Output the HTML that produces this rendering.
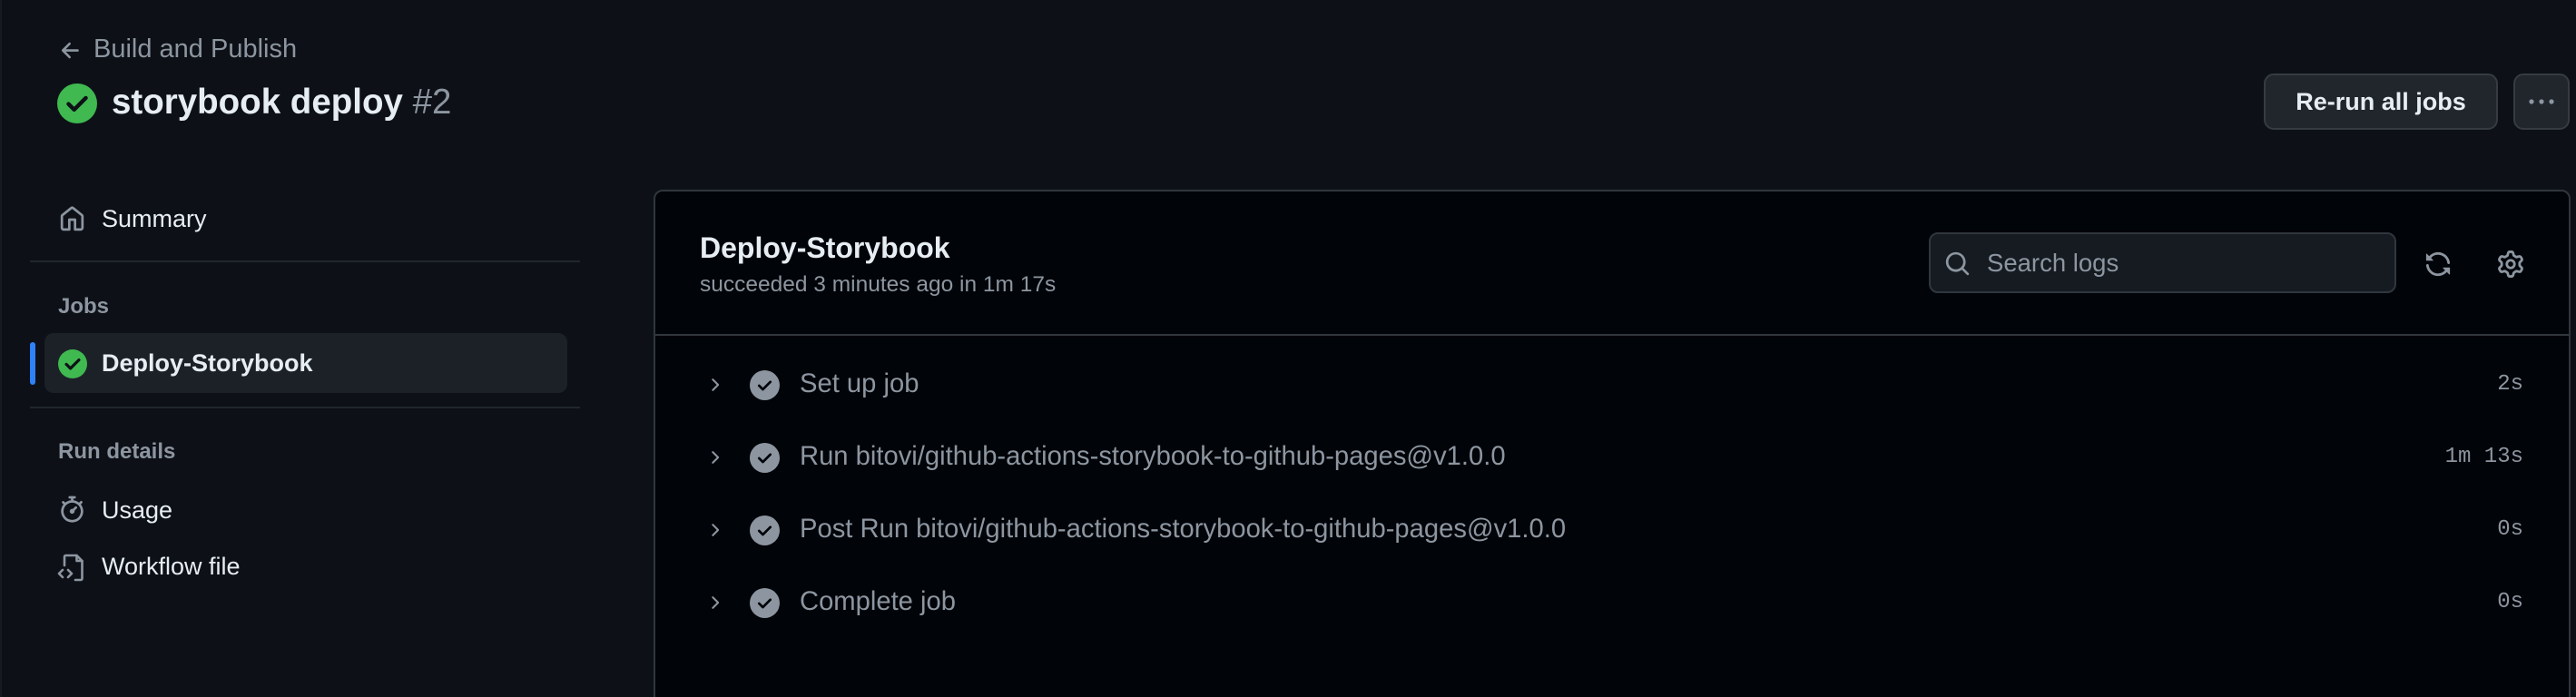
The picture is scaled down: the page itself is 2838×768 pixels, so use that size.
<!DOCTYPE html>
<html><head><meta charset="utf-8"><style>
*{margin:0;padding:0;box-sizing:border-box}
html,body{width:2838px;height:768px;overflow:hidden}
body{background:#0d1117;font-family:"Liberation Sans",sans-serif;color:#e6edf3;position:relative}
.a{position:absolute;white-space:nowrap}
.m{color:#8d96a0}
svg{display:block}
.st{position:absolute;left:0;width:2838px;height:40px}
.st .ch{position:absolute;left:776px;top:7px}
.st .ck{position:absolute;left:826px;top:4px}
.st .tx{position:absolute;left:881px;top:3px;font-size:29.2px;color:#8d96a0;white-space:nowrap}
.st .tm{position:absolute;right:58px;top:6px;font-family:"Liberation Mono",monospace;font-size:24px;color:#8d96a0}
</style></head><body>
<div class="a" style="left:0;top:0;width:2px;height:768px;background:#161b22"></div>
<svg class="a" style="left:64px;top:42px" width="28" height="28" viewBox="0 0 16 16" fill="#8d96a0"><path d="M7.78 12.53a.75.75 0 0 1-1.06 0L2.47 8.28a.75.75 0 0 1 0-1.06l4.25-4.250a.75.75 0 0 1 1.06 1.06L4.81 7h7.44a.75.75 0 0 1 0 1.5H4.81l2.970 2.970a.75.75 0 0 1 0 1.060Z"/></svg>
<div class="a m" style="left:103px;top:38px;font-size:29px">Build and Publish</div>
<svg class="a" style="left:63px;top:92px" width="44" height="44" viewBox="0 0 24 24"><circle cx="12" cy="12" r="12" fill="#3fb950"/><path d="M6.8 12.3l3.4 3.4 7-7" stroke="#0d1117" stroke-width="2.4" fill="none" stroke-linecap="round" stroke-linejoin="round"/></svg>
<div class="a" style="left:123px;top:91px;font-size:38.5px;font-weight:bold">storybook deploy <span class="m" style="font-weight:normal">#2</span></div>
<div class="a" style="left:2494px;top:81px;width:258px;height:62px;background:#21262d;border:2px solid #363b42;border-radius:11px;font-size:27px;font-weight:bold;text-align:center;line-height:58px">Re-run all jobs</div>
<div class="a" style="left:2769px;top:81px;width:62px;height:62px;background:#21262d;border:2px solid #363b42;border-radius:11px"></div>
<svg class="a" style="left:2784px;top:104px" width="32" height="16" viewBox="0 0 32 16" fill="#8d96a0"><circle cx="5" cy="8" r="2.6"/><circle cx="16" cy="8" r="2.6"/><circle cx="27" cy="8" r="2.6"/></svg>
<svg class="a" style="left:65px;top:227px" width="29" height="29" viewBox="0 0 16 16" fill="#8d96a0"><path d="M6.906.664a1.749 1.749 0 0 1 2.187 0l5.25 4.2c.415.332.657.835.657 1.367v7.019A1.75 1.75 0 0 1 13.25 15h-3.5a.75.75 0 0 1-.75-.75V9H7v5.25a.75.75 0 0 1-.75.75h-3.5A1.75 1.75 0 0 1 1 13.25V6.23c0-.531.242-1.034.657-1.366l5.25-4.2Zm1.25 1.171a.25.25 0 0 0-.312 0l-5.25 4.2a.25.25 0 0 0-.094.196v7.019c0 .138.112.25.25.25H5.5V8.25a.75.75 0 0 1 .75-.75h3.5a.75.75 0 0 1 .75.75v5.25h2.75a.25.25 0 0 0 .25-.25V6.23a.25.25 0 0 0-.094-.195Z"/></svg>
<div class="a" style="left:112px;top:226px;font-size:27px">Summary</div>
<div class="a" style="left:33px;top:287px;width:606px;height:2px;background:#21262d"></div>
<div class="a m" style="left:64px;top:324px;font-size:24px;font-weight:bold">Jobs</div>
<div class="a" style="left:33px;top:377px;width:6px;height:47px;background:#2f81f7;border-radius:3px"></div>
<div class="a" style="left:49px;top:367px;width:576px;height:66px;background:#1c2128;border-radius:10px"></div>
<svg class="a" style="left:64px;top:385px" width="32" height="32" viewBox="0 0 24 24"><circle cx="12" cy="12" r="12" fill="#3fb950"/><path d="M6.8 12.3l3.4 3.4 7-7" stroke="#0d1117" stroke-width="2.4" fill="none" stroke-linecap="round" stroke-linejoin="round"/></svg>
<div class="a" style="left:112px;top:385px;font-size:27px;font-weight:bold">Deploy-Storybook</div>
<div class="a" style="left:33px;top:448px;width:606px;height:2px;background:#21262d"></div>
<div class="a m" style="left:64px;top:484px;font-size:24px;font-weight:bold">Run details</div>
<svg class="a" style="left:65px;top:546px" width="29" height="32" viewBox="0 0 16 17" fill="#8d96a0"><path d="M5.75.75A.75.75 0 0 1 6.5 0h3a.75.75 0 0 1 0 1.5h-.75v1l-.001.041a6.724 6.724 0 0 1 3.464 1.435l.007-.006.75-.75a.75.75 0 1 1 1.06 1.06l-.75.75-.006.007a6.75 6.75 0 1 1-10.548 0L2.72 5.03l-.75-.75a.75.75 0 0 1 1.06-1.06l.75.75.007.006A6.72 6.72 0 0 1 7.25 2.541V1.5H6.5a.75.75 0 0 1-.75-.75ZM8 14.5A5.25 5.25 0 1 0 8 4a5.25 5.25 0 0 0 0 10.5Zm.389-6.7 1.33-1.33a.75.75 0 1 1 1.061 1.06L9.45 8.861A1.503 1.503 0 0 1 8 10.75a1.499 1.499 0 1 1 .389-2.95Z"/></svg>
<div class="a" style="left:112px;top:547px;font-size:27px">Usage</div>
<svg class="a" style="left:63px;top:609px" width="32" height="32" viewBox="0 0 32 32" fill="none" stroke="#8d96a0" stroke-width="2.6" stroke-linecap="round" stroke-linejoin="round"><path d="M8 14V4.5a1.5 1.5 0 0 1 1.5-1.5h12l6 6v19.5a1.5 1.5 0 0 1-1.5 1.5H20"/><path d="M21.5 3v6h6"/><path d="M6 19l-4 4 4 4M12 19l4 4-4 4"/></svg>
<div class="a" style="left:112px;top:609px;font-size:27px">Workflow file</div>
<div class="a" style="left:720px;top:209px;width:2112px;height:570px;background:#010409;border:2px solid #30363d;border-radius:10px"></div>
<div class="a" style="left:722px;top:368px;width:2108px;height:2px;background:#30363d"></div>
<div class="a" style="left:771px;top:255px;font-size:32px;font-weight:bold">Deploy-Storybook</div>
<div class="a m" style="left:771px;top:300px;font-size:24.5px">succeeded 3 minutes ago in 1m 17s</div>
<div class="a" style="left:2125px;top:256px;width:515px;height:67px;background:#161b22;border:2px solid #30363d;border-radius:10px"></div>
<svg class="a" style="left:2142px;top:276px" width="29" height="29" viewBox="0 0 16 16" fill="#8d96a0"><path d="M10.68 11.74a6 6 0 0 1-7.922-8.982 6 6 0 0 1 8.982 7.922l3.04 3.04a.749.749 0 0 1-.326 1.275.749.749 0 0 1-.734-.215ZM11.5 7a4.499 4.499 0 1 0-8.997 0A4.499 4.499 0 0 0 11.5 7Z"/></svg>
<div class="a m" style="left:2189px;top:274px;font-size:27.5px">Search logs</div>
<svg class="a" style="left:2671px;top:276px" width="30" height="30" viewBox="0 0 16 16" fill="#8d96a0"><path d="M1.705 8.005a.75.75 0 0 1 .834.656 5.5 5.5 0 0 0 9.592 2.97l-1.204-1.204a.25.25 0 0 1 .177-.427h3.646a.25.25 0 0 1 .25.25v3.646a.25.25 0 0 1-.427.177l-1.38-1.38A7.002 7.002 0 0 1 1.05 8.84a.75.75 0 0 1 .656-.834ZM8 2.5a5.487 5.487 0 0 0-4.131 1.869l1.204 1.204A.25.25 0 0 1 4.896 6H1.25A.25.25 0 0 1 1 5.75V2.104a.25.25 0 0 1 .427-.177l1.38 1.38A7.002 7.002 0 0 1 14.95 7.16a.75.75 0 0 1-1.49.178A5.5 5.5 0 0 0 8 2.5Z"/></svg>
<svg class="a" style="left:2751px;top:276px" width="30" height="30" viewBox="0 0 16 16" fill="#8d96a0"><path d="M8 0a8.2 8.2 0 0 1 .701.031C9.444.095 9.99.645 10.16 1.29l.288 1.107c.018.066.079.158.212.224.231.114.454.243.668.386.123.082.233.09.299.071l1.103-.303c.644-.176 1.392.021 1.820.63.27.385.506.792.704 1.218.315.675.111 1.422-.364 1.891l-.814.806c-.049.048-.098.147-.088.294.016.257.016.515 0 .772-.01.147.038.246.088.294l.814.806c.475.469.679 1.216.364 1.891a7.977 7.977 0 0 1-.704 1.217c-.428.61-1.176.807-1.82.63l-1.102-.302c-.067-.019-.177-.011-.3.071a5.909 5.909 0 0 1-.668.386c-.133.066-.194.158-.211.224l-.29 1.106c-.168.646-.715 1.196-1.458 1.26a8.006 8.006 0 0 1-1.402 0c-.743-.064-1.289-.614-1.458-1.26l-.289-1.106c-.018-.066-.079-.158-.212-.224a5.738 5.738 0 0 1-.668-.386c-.123-.082-.233-.09-.299-.071l-1.103.303c-.644.176-1.392-.021-1.820-.63a8.12 8.12 0 0 1-.704-1.218c-.315-.675-.111-1.422.363-1.891l.815-.806c.05-.048.098-.147.088-.294a6.214 6.214 0 0 1 0-.772c.01-.147-.038-.246-.088-.294l-.815-.806C.635 6.045.431 5.298.746 4.623a7.92 7.92 0 0 1 .704-1.217c.428-.61 1.176-.807 1.82-.63l1.102.302c.067.019.177.011.3-.071.214-.143.437-.272.668-.386.133-.066.194-.158.211-.224l.29-1.106C6.009.645 6.556.095 7.299.03 7.53.01 7.764 0 8 0Zm-.571 1.525c-.036.003-.108.036-.137.146l-.289 1.105c-.147.561-.549.967-.998 1.189-.173.086-.34.183-.5.29-.417.278-.97.423-1.529.27l-1.103-.303c-.109-.03-.175.016-.195.045-.22.312-.412.644-.573.99-.014.031-.021.11.059.19l.815.806c.411.406.562.957.53 1.456a4.709 4.709 0 0 0 0 .582c.032.499-.119 1.05-.53 1.456l-.815.806c-.081.08-.073.159-.059.19.162.346.353.677.573.989.02.03.085.076.195.046l1.102-.303c.56-.153 1.113-.008 1.53.27.161.107.328.204.501.29.447.222.85.629.997 1.189l.289 1.105c.029.109.101.143.137.146a6.6 6.6 0 0 0 1.142 0c.036-.003.108-.036.137-.146l.289-1.105c.147-.561.549-.967.998-1.189.173-.086.34-.183.5-.29.417-.278.97-.423 1.529-.27l1.103.303c.109.029.175-.016.195-.045.22-.313.411-.644.573-.99.014-.031.021-.11-.059-.19l-.815-.806c-.411-.406-.562-.957-.53-1.456a4.709 4.709 0 0 0 0-.582c-.032-.499.119-1.05.53-1.456l.815-.806c.081-.08.073-.159.059-.19a6.464 6.464 0 0 0-.573-.989c-.02-.03-.085-.076-.195-.046l-1.102.303c-.56.153-1.113.008-1.530-.27a4.44 4.44 0 0 0-.501-.29c-.447-.222-.85-.629-.997-1.189l-.289-1.105c-.029-.11-.101-.143-.137-.146a6.6 6.6 0 0 0-1.142 0ZM11 8a3 3 0 1 1-6 0 3 3 0 0 1 6 0ZM9.5 8a1.5 1.5 0 1 0-3.001.001A1.5 1.5 0 0 0 9.5 8Z"/></svg>
<div class="st" style="top:404px"><svg class="ch" width="22" height="26" viewBox="0 0 16 16" fill="#8d96a0"><path d="M6.22 3.22a.75.75 0 0 1 1.06 0l4.25 4.25a.75.75 0 0 1 0 1.06l-4.25 4.25a.751.751 0 0 1-1.042-.018.751.751 0 0 1-.018-1.042L9.94 8 6.22 4.28a.75.75 0 0 1 0-1.06Z"/></svg><svg class="ck" width="33" height="33" viewBox="0 0 24 24"><circle cx="12" cy="12" r="12" fill="#8d96a0"/><path d="M7.5 12.3l3 3 6-6" stroke="#010409" stroke-width="2" fill="none" stroke-linecap="round" stroke-linejoin="round"/></svg><span class="tx">Set up job</span><span class="tm">2s</span></div>
<div class="st" style="top:484px"><svg class="ch" width="22" height="26" viewBox="0 0 16 16" fill="#8d96a0"><path d="M6.22 3.22a.75.75 0 0 1 1.06 0l4.25 4.25a.75.75 0 0 1 0 1.06l-4.25 4.25a.751.751 0 0 1-1.042-.018.751.751 0 0 1-.018-1.042L9.94 8 6.22 4.28a.75.75 0 0 1 0-1.06Z"/></svg><svg class="ck" width="33" height="33" viewBox="0 0 24 24"><circle cx="12" cy="12" r="12" fill="#8d96a0"/><path d="M7.5 12.3l3 3 6-6" stroke="#010409" stroke-width="2" fill="none" stroke-linecap="round" stroke-linejoin="round"/></svg><span class="tx">Run bitovi/github-actions-storybook-to-github-pages@v1.0.0</span><span class="tm">1m 13s</span></div>
<div class="st" style="top:564px"><svg class="ch" width="22" height="26" viewBox="0 0 16 16" fill="#8d96a0"><path d="M6.22 3.22a.75.75 0 0 1 1.06 0l4.25 4.25a.75.75 0 0 1 0 1.06l-4.25 4.25a.751.751 0 0 1-1.042-.018.751.751 0 0 1-.018-1.042L9.94 8 6.22 4.28a.75.75 0 0 1 0-1.06Z"/></svg><svg class="ck" width="33" height="33" viewBox="0 0 24 24"><circle cx="12" cy="12" r="12" fill="#8d96a0"/><path d="M7.5 12.3l3 3 6-6" stroke="#010409" stroke-width="2" fill="none" stroke-linecap="round" stroke-linejoin="round"/></svg><span class="tx">Post Run bitovi/github-actions-storybook-to-github-pages@v1.0.0</span><span class="tm">0s</span></div>
<div class="st" style="top:644px"><svg class="ch" width="22" height="26" viewBox="0 0 16 16" fill="#8d96a0"><path d="M6.22 3.22a.75.75 0 0 1 1.06 0l4.25 4.25a.75.75 0 0 1 0 1.06l-4.25 4.25a.751.751 0 0 1-1.042-.018.751.751 0 0 1-.018-1.042L9.94 8 6.22 4.28a.75.75 0 0 1 0-1.06Z"/></svg><svg class="ck" width="33" height="33" viewBox="0 0 24 24"><circle cx="12" cy="12" r="12" fill="#8d96a0"/><path d="M7.5 12.3l3 3 6-6" stroke="#010409" stroke-width="2" fill="none" stroke-linecap="round" stroke-linejoin="round"/></svg><span class="tx">Complete job</span><span class="tm">0s</span></div>
</body></html>
